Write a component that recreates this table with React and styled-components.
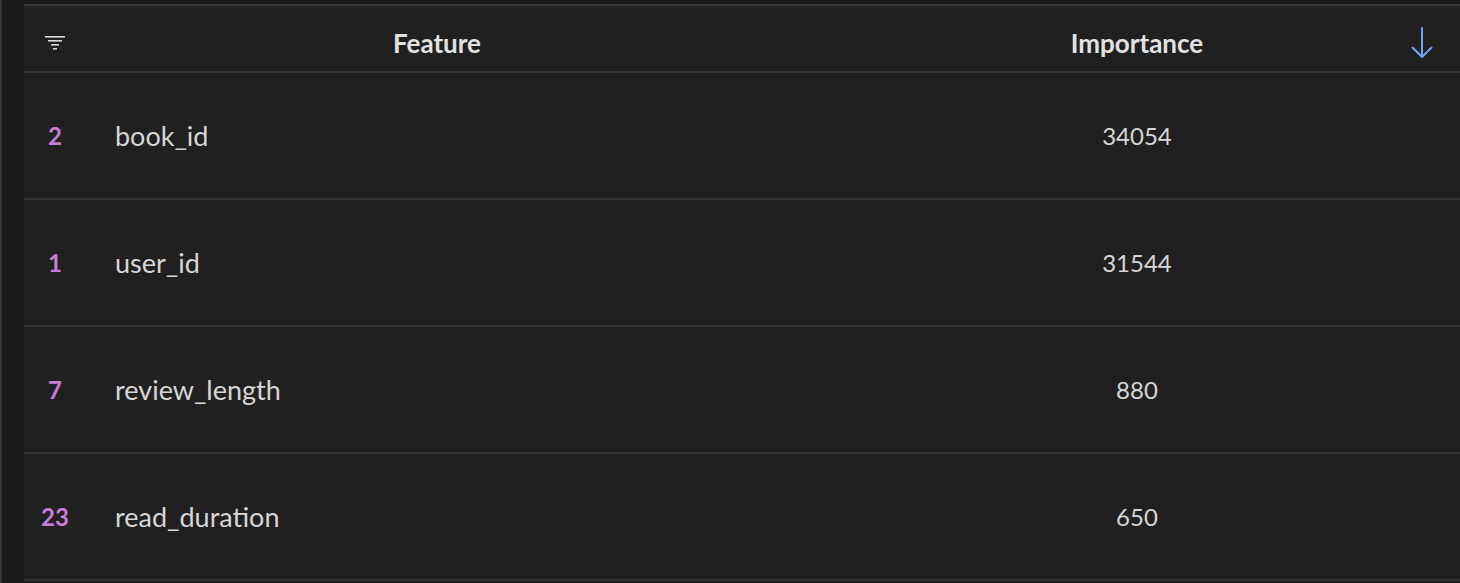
import React from "react"
import styled, { createGlobalStyle } from "styled-components"

const rows = [
	{ rank: 2, feature: "book_id", importance: 34054 },
	{ rank: 1, feature: "user_id", importance: 31544 },
	{ rank: 7, feature: "review_length", importance: 880 },
	{ rank: 23, feature: "read_duration", importance: 650 },
]

const GlobalStyle = createGlobalStyle`
	html, body {
		margin: 0;
		padding: 0;
		background: #1c1c1c;
		font-family: Lato, "Open Sans", sans-serif;
	}
`

function FilterIcon() {
	return (
		<svg width="22" height="16" viewBox="0 0 22 16">
			<g fill="#d8d8d8">
				<rect x="1" y="1" width="20" height="1.6" />
				<rect x="4" y="5" width="14" height="1.6" />
				<rect x="7" y="9" width="8" height="1.6" />
				<rect x="9" y="13" width="4" height="1.6" />
			</g>
		</svg>
	)
}

function ArrowDown() {
	return (
		<svg width="24" height="34" viewBox="0 0 24 34">
			<path
				d="M12 2 V31 M2.5 21.5 L12 31 L21.5 21.5"
				fill="none"
				stroke="#6fa6f2"
				strokeWidth="2"
				strokeLinecap="round"
				strokeLinejoin="round"
			/>
		</svg>
	)
}

export default function App() {
	return (
		<>
			<GlobalStyle />
			<Page>
				<Table>
					<HeaderRow>
						<IndexCell>
							<FilterIcon />
						</IndexCell>
						<HeaderCell>Feature</HeaderCell>
						<HeaderCell>
							Importance
							<SortIcon>
								<ArrowDown />
							</SortIcon>
						</HeaderCell>
					</HeaderRow>
					{rows.map((row) => (
						<Row key={row.feature}>
							<IndexCell>
								<Rank>{row.rank}</Rank>
							</IndexCell>
							<FeatureCell>{row.feature}</FeatureCell>
							<ValueCell>{row.importance}</ValueCell>
						</Row>
					))}
				</Table>
			</Page>
		</>
	)
}

const Page = styled.div`
	width: 1460px;
	height: 583px;
	box-sizing: border-box;
	overflow: hidden;
	background: #1b1b1b;
	border-left: 2px solid #383838;
	padding: 4px 0 0 22px;
`

const Table = styled.div`
	width: 1462px;
	background: #202020;
	border-top: 2px solid #3a3a3a;
	border-bottom: 2px solid #353535;
`

const gridCols = `62px 702px 698px`

const HeaderRow = styled.div`
	display: grid;
	grid-template-columns: ${gridCols};
	height: 67px;
	box-sizing: border-box;
	padding-top: 9px;
	border-bottom: 2px solid #333333;
	align-items: center;
`

const Row = styled.div`
	display: grid;
	grid-template-columns: ${gridCols};
	height: 125px;
	align-items: center;
	& + & {
		border-top: 2px solid #333333;
	}
`

const IndexCell = styled.div`
	display: flex;
	justify-content: center;
	align-items: center;
`

const HeaderCell = styled.div`
	position: relative;
	text-align: center;
	font-weight: 700;
	font-size: 26px;
	color: #e2e2e2;
`

const SortIcon = styled.span`
	position: absolute;
	right: 52px;
	top: 50%;
	transform: translateY(-50%);
	display: flex;
`

const Rank = styled.span`
	font-weight: 700;
	font-size: 24px;
	color: #c77ed8;
`

const FeatureCell = styled.div`
	padding-left: 29px;
	font-size: 27px;
	color: #d6d6d6;
`

const ValueCell = styled.div`
	text-align: center;
	font-size: 24px;
	color: #d6d6d6;
`
